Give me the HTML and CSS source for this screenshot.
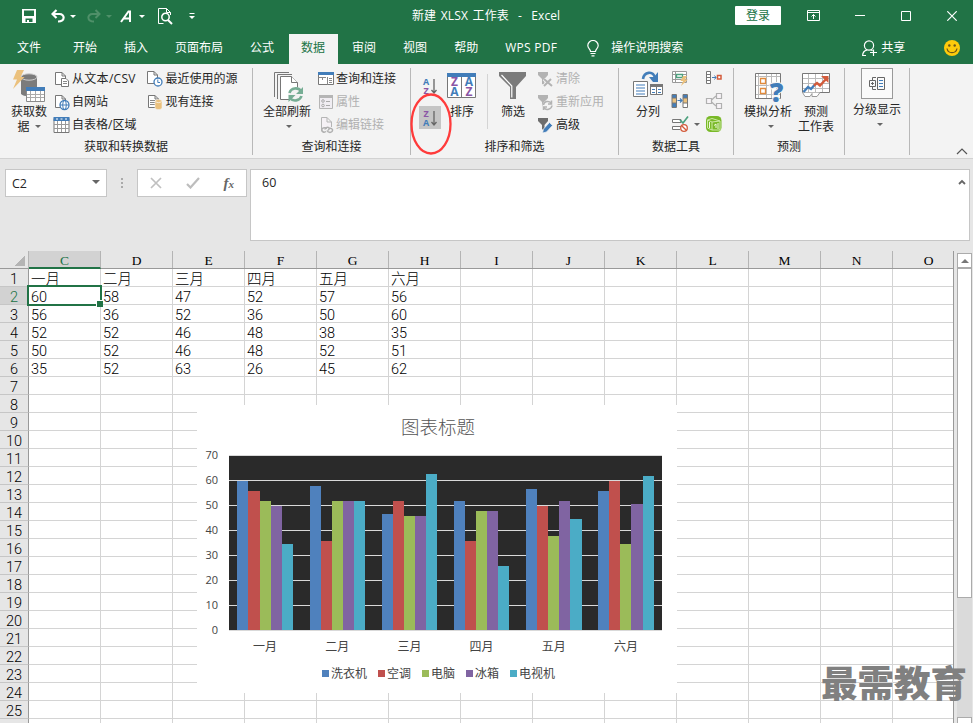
FILE: index.html
```html
<!DOCTYPE html>
<html lang="zh-CN">
<head>
    <meta charset="UTF-8">
    <meta name="viewport" content="width=device-width, initial-scale=1.0">
    <title>新建 XLSX 工作表 - Excel</title>
    <link rel="stylesheet" href="styles.css">
</head>
<body>

<header class="titlebar">
    <div class="quick">
        <svg class="q-save" width="14" height="14" viewBox="0 0 14 14"><path d="M0 0H14V14H0Z" fill="#fff"/><path d="M2 1.500H12V7H2Z M3.500 9.500H10.500V13H7V11H5V13H3.500Z" fill="#217346"/></svg>
        <svg class="q-undo" width="14" height="14" viewBox="0 0 14 14"><path d="M5.500 1L1.500 5L5.500 9M2 5H8.500C14 5 14.500 12.500 7 12.500" fill="none" stroke="#fff" stroke-width="2.200"/></svg>
        <i class="caret q-caret1"></i>
        <svg class="q-redo" width="14" height="14" viewBox="0 0 14 14"><path d="M8.500 1L12.500 5L8.500 9M12 5H5.500C0 5-.5 12.500 7 12.500" fill="none" stroke="#4f9069" stroke-width="2"/></svg>
        <i class="caret faded q-caret2"></i>
        <svg class="q-font" width="13" height="13" viewBox="0 0 13 13"><path d="M1 12L8.500 1.500H10V12M4 8.500H9.500" fill="none" stroke="#fff" stroke-width="2"/></svg>
        <i class="caret q-caret3"></i>
        <svg class="q-preview" width="15" height="17" viewBox="0 0 15 17"><path d="M5.500 15.500H.5V.5H8.500L12.500 4.500V7M8.500 .5V4.500H12.500" fill="none" stroke="#fff"/><circle cx="7.500" cy="9" r="3.700" fill="none" stroke="#fff" stroke-width="1.500"/><path d="M10 12L14 16" stroke="#fff" stroke-width="2"/></svg>
        <svg class="q-more" width="6" height="6" viewBox="0 0 6 6"><path d="M.5 .5H5.500" stroke="#fff"/><path d="M0 3H6L3 6Z" fill="#fff"/></svg>
    </div>
    <div class="doc-title">新建 XLSX 工作表&nbsp; -&nbsp; Excel</div>
    <button class="login">登录</button>
    <div class="window-buttons">
        <svg width="13" height="11" viewBox="0 0 13 11"><path d="M.5 .5H12.500V10.500H.5ZM.5 2.500H12.500M6.500 9V4.500M4.500 6.500L6.500 4.500L8.500 6.500" fill="none" stroke="#fff"/></svg>
        <svg width="10" height="11" viewBox="0 0 10 11"><path d="M0 5.500H10" stroke="#fff"/></svg>
        <svg width="10" height="10" viewBox="0 0 10 10"><path d="M.5 .5H9.500V9.500H.5Z" fill="none" stroke="#fff"/></svg>
        <svg width="10" height="10" viewBox="0 0 10 10"><path d="M.3 .3L9.700 9.700M9.700 .3L.3 9.700" stroke="#fff" stroke-width="1.200"/></svg>
    </div>
</header>

<nav class="tabs">
    <span class="tab file">文件</span>
    <span class="tab">开始</span>
    <span class="tab">插入</span>
    <span class="tab">页面布局</span>
    <span class="tab">公式</span>
    <span class="tab active">数据</span>
    <span class="tab">审阅</span>
    <span class="tab">视图</span>
    <span class="tab">帮助</span>
    <span class="tab pdf">WPS PDF</span>
    <span class="tell-me">
        <svg width="12" height="17" viewBox="0 0 12 17"><path d="M3.500 11.500C3.500 9 .8 8.500 .8 5.500A5.200 5 0 0 1 11.200 5.500C11.200 8.500 8.500 9 8.500 11.500ZM3.500 13.500H8.500M4.500 15.800H7.500" fill="none" stroke="#fff" stroke-width="1.200"/></svg>
        操作说明搜索
    </span>
    <span class="share">
        <svg width="15" height="17" viewBox="0 0 15 17"><circle cx="7" cy="5.500" r="4.600" fill="none" stroke="#fff" stroke-width="1.200"/><path d="M.6 16C.6 12.500 2.500 10.500 5 9.800M9 9.700L10.500 10.800M11.500 9.500V16M8 12.500H15M.2 15.500H4" fill="none" stroke="#fff" stroke-width="1.200"/></svg>
        共享
    </span>
    <svg class="smiley" width="16" height="16" viewBox="0 0 16 16"><circle cx="8" cy="8" r="8" fill="#fecb0b"/><circle cx="5.300" cy="5.500" r="1.200" fill="#6b5518"/><circle cx="10.700" cy="5.500" r="1.200" fill="#6b5518"/><path d="M3 8.500C4 14 12 14 13 8.500" fill="none" stroke="#6b5518" stroke-width="1.200"/></svg>
</nav>

<section class="ribbon">
    <div class="group g-get">
        <div class="tools">
            <div class="big get-data">
                <svg width="34" height="34" viewBox="0 0 34 34"><path d="M9 9V26C12 29 20 29 25 26V9" fill="#7b7b7b"/><ellipse cx="17" cy="9" rx="8" ry="3.200" fill="#7b7b7b" stroke="#d0d0d0"/><path d="M5 2H12L8.500 9H12.500L1 21L5 11.500H1Z" fill="#ebc17d"/><path d="M14.500 19.500H32.500V33.500H14.500Z" fill="#fff" stroke="#8a8a8a"/><path d="M14 19H33V23H14Z" fill="#427db9"/><path d="M15 26.500H32M15 29.500H32M18.500 23V33M23.500 23V33M28.500 23V33" stroke="#aaa"/></svg>
                <span>获取数</span>
                <span>据<i class="caret dark"></i></span>
            </div>
            <div class="list">
                <div class="small"><svg width="18" height="18" viewBox="0 0 18 18"><path d="M2.500 2.500H9L12.500 6V14.500H2.500ZM9 2.500V6H12.500" fill="#fff" stroke="#777"/><path d="M8.500 8.500H13L15.500 11V16.500H8.500Z" fill="#fff" stroke="#777"/><path d="M10 11.500H14M10 13.500H14" stroke="#888"/></svg><span class="csv">从文本/CSV</span></div>
                <div class="small"><svg width="18" height="18" viewBox="0 0 18 18"><path d="M2.500 2.500H9L12.500 6V14.500H2.500ZM9 2.500V6H12.500" fill="#fff" stroke="#777"/><circle cx="11.500" cy="12" r="4.500" fill="#fff" stroke="#427db9" stroke-width="1.300"/><ellipse cx="11.500" cy="12" rx="1.800" ry="4.500" fill="none" stroke="#427db9"/><path d="M7 12H16" stroke="#427db9"/></svg>自网站</div>
                <div class="small"><svg width="18" height="18" viewBox="0 0 18 18"><path d="M1 2.500H16V16.500H1Z" fill="#fff" stroke="#777"/><path d="M0.500 1H16.500V5H.5Z" fill="#427db9"/><path d="M3 3H5M7.500 3H9.500M12 3H14" stroke="#fff"/><path d="M1 8.500H16M1 12.500H16M4.500 5V16M8.500 5V16M12.500 5V16" stroke="#999"/></svg>自表格/区域</div>
            </div>
            <div class="list recent">
                <div class="small"><svg width="18" height="18" viewBox="0 0 18 18"><path d="M1.500 1.500H8L11.500 5V13.500H1.500ZM8 1.500V5H11.500" fill="#fff" stroke="#777"/><circle cx="12" cy="12" r="4" fill="#fff" stroke="#427db9" stroke-width="1.300"/><path d="M11.800 9.500V12.500H14" fill="none" stroke="#427db9"/></svg>最近使用的源</div>
                <div class="small"><svg width="18" height="18" viewBox="0 0 18 18"><path d="M2.500 2.500H9L12.500 6V14.500H2.500ZM9 2.500V6H12.500" fill="#fff" stroke="#777"/><path d="M4 7.500H9M4 9.500H9M4 11.500H9" stroke="#888"/><path d="M9 8V15C10 17 15 17 16 15V8C15 6 10 6 9 8Z" fill="#ebc17d" stroke="#f3f3f3" stroke-width=".6"/><path d="M9.500 8.500C11 10 14 10 15.500 8.500" stroke="#fff" fill="none" stroke-width=".7"/></svg>现有连接</div>
            </div>
        </div>
        <div class="caption">获取和转换数据</div>
    </div>

    <div class="group g-query">
        <div class="tools">
            <div class="big refresh">
                <svg width="34" height="34" viewBox="0 0 34 34"><path d="M4.500 29V4.500H19M7.500 31V6.500H22" fill="none" stroke="#777"/><path d="M10.500 8.500H21.500L27.500 14.500V31.500H10.500Z" fill="#fff" stroke="#777"/><path d="M21.500 8.500V14.500H27.500" fill="#fff" stroke="#777"/><circle cx="25.500" cy="26.500" r="7.500" fill="#f3f3f3"/><path d="M19.500 25C21 19.500 28 19 31 23M31.500 28C30 33 23 34 20 30" fill="none" stroke="#76ad94" stroke-width="2.600"/><path d="M33 19V26H26ZM18.500 34V27H25.500Z" fill="#76ad94"/></svg>
                <span>全部刷新</span>
                <i class="caret dark"></i>
            </div>
            <div class="list">
                <div class="small"><svg width="18" height="18" viewBox="0 0 18 18"><path d="M1.500 2.500H16.500V14.500H1.500Z" fill="#fff" stroke="#777"/><path d="M1 2H17V5H1Z" fill="#427db9"/><path d="M10.500 7V15M1.500 7.500H9M12 8.500H15M12 10.500H15M12 12.500H15M5.500 7V10" stroke="#888"/></svg>查询和连接</div>
                <div class="small off"><svg width="18" height="18" viewBox="0 0 18 18"><path d="M2.500 2.500H15.500V15.500H2.500Z" fill="#f0edf2" stroke="#b5b5b5"/><path d="M2 2H16V5H2Z" fill="#b5b5b5"/><circle cx="6" cy="8" r="1.300" fill="none" stroke="#aaa"/><circle cx="6" cy="12.500" r="1.300" fill="none" stroke="#aaa"/><path d="M9 8.500H13M9 12.500H13" stroke="#aaa"/></svg>属性</div>
                <div class="small off"><svg width="18" height="18" viewBox="0 0 18 18"><path d="M4.500 14.500V1.500H10L14.500 6V11M10 1.500V6H14.500" fill="#f5f1f5" stroke="#b5b5b5"/><path d="M9 15.500C7 17 4 15.500 5 13C6 11 9 11.500 9.500 13M8 13.500C8 11 12 10.500 12.500 13M11 14.500C13 10.500 17 13 15 15.500C13.500 17 11 16.500 10 14.500" fill="none" stroke="#b0b0b0" stroke-width="1.500"/></svg>编辑链接</div>
            </div>
        </div>
        <div class="caption">查询和连接</div>
    </div>

    <div class="group g-sort">
        <div class="tools">
            <div class="sort-pair">
                <div class="sort-btn"><svg width="16" height="20" viewBox="0 0 16 20"><text class="letter a" x="4" y="9">A</text><text class="letter z" x="4" y="17.500">Z</text><path d="M12 3V17M9.500 14L12 17L14.500 14" fill="none" stroke="#666" stroke-width="1.300"/></svg></div>
                <div class="sort-btn pressed"><svg width="16" height="20" viewBox="0 0 16 20"><text class="letter z" x="4" y="9">Z</text><text class="letter a" x="4" y="17.500">A</text><path d="M12 3V17M9.500 14L12 17L14.500 14" fill="none" stroke="#666" stroke-width="1.300"/></svg></div>
            </div>
            <div class="big sort">
                <svg width="34" height="34" viewBox="0 0 34 34"><path d="M2.500 6.500H30.500V29.500H2.500Z" fill="#fff" stroke="#777"/><path d="M2 5H31V9H2Z" fill="#427db9"/><path d="M16.500 9V29" stroke="#777"/><text class="letter big-letter z" x="9.500" y="18">Z</text><text class="letter big-letter a" x="9.500" y="28">A</text><text class="letter big-letter a" x="24" y="18">A</text><text class="letter big-letter z" x="24" y="28">Z</text></svg>
                <span>排序</span>
            </div>
            <div class="divider"></div>
            <div class="big filter">
                <svg width="34" height="34" viewBox="0 0 34 34"><path d="M3 4H30V8L20 19V31H14V19L3 8Z" fill="#7b7b7b"/><path d="M5.500 7L15.800 18V29.500" fill="none" stroke="#fff" stroke-width="1.200"/></svg>
                <span>筛选</span>
            </div>
            <div class="list">
                <div class="small off"><svg width="18" height="18" viewBox="0 0 18 18"><path d="M1 2H11V5L7.500 9V15L5 14V9L1 5Z" fill="#b3b3b3"/><path d="M7 9L14 16M14 9L7 16" stroke="#f3f3f3" stroke-width="3.500"/><path d="M7 9L15 16M14 9L7 16" stroke="#b3b3b3" stroke-width="2"/></svg>清除</div>
                <div class="small off"><svg width="18" height="18" viewBox="0 0 18 18"><path d="M1 2H11V5L7.500 9V14L5 13V9L1 5Z" fill="#b3b3b3"/><circle cx="10.500" cy="12.500" r="5" fill="#f3f3f3"/><path d="M6.500 12C7 8 12 7.500 14 10M15 12.500C14.500 16.500 9 17.500 7 15M14.500 7.500V11H11M6.500 17V14H10" fill="none" stroke="#b3b3b3" stroke-width="1.500"/></svg>重新应用</div>
                <div class="small"><svg width="18" height="18" viewBox="0 0 18 18"><path d="M1 2H11V5L7.500 9V15L5 13V9L1 5Z" fill="#6d6d6d"/><path d="M5.500 17L6.500 13L12.500 6.500L15.500 9.500L9.500 16Z" fill="#427db9" stroke="#f3f3f3" stroke-width=".7"/></svg>高级</div>
            </div>
            <svg class="marker" width="44" height="64" viewBox="0 0 44 64"><ellipse cx="22" cy="32" rx="19.500" ry="29.500" fill="none" stroke="#ff3b3b" stroke-width="2.300"/></svg>
        </div>
        <div class="caption">排序和筛选</div>
    </div>

    <div class="group g-data">
        <div class="tools">
            <div class="big split">
                <svg width="34" height="34" viewBox="0 0 34 34"><path d="M2.500 13.500H16.500V28.500H2.500Z" fill="#fff" stroke="#777"/><path d="M5 17H14M5 20H14M5 23H14M5 26H14" stroke="#427db9" stroke-width="1.200"/><path d="M19.500 16.500H31.500V26.500H19.500Z" fill="#fff" stroke="#777"/><path d="M19 16H32V19H19Z" fill="#777"/><path d="M25.500 19V26" stroke="#777"/><path d="M21 21.500H24M27 21.500H30M21 24.500H24M27 24.500H30" stroke="#427db9"/><path d="M12 11C13 4 22 2 24 10" fill="none" stroke="#427db9" stroke-width="2.600"/><path d="M18 9H23L27 4V14H22Z" fill="#427db9"/></svg>
                <span>分列</span>
            </div>
            <div class="icons">
                <svg width="18" height="18" viewBox="0 0 18 18"><path d="M1.500 2.500H15.500V13.500H1.500ZM1 5.500H16M1 10.500H16M4.500 2V14" fill="#fff" stroke="#999"/><path d="M5.500 5.500H11.500V8.500H5.500Z" fill="#fff" stroke="#4ca17e" stroke-width="1.300"/><path d="M12 7H16L14 10.500H17L10 17L12 12H9.500Z" fill="#ebc17d"/></svg>
                <svg width="18" height="18" viewBox="0 0 18 18"><path d="M1 2H5V15H1ZM12 2H16V15H12Z" fill="#ebc17d"/><path d="M1 2H5V6H1ZM1 11H5V15H1ZM12 2H16V6H12Z" fill="#427db9"/><path d="M12 11H16V15H12Z" fill="#fff"/><path d="M1 2.500H5.500V15.500H1ZM12 2.500H16.500V15.500H12ZM1 6H5.500M1 11H5.500M12 6H16.500M12 11H16.500" fill="none" stroke="#777"/><path d="M6.500 8.500H11M9 6.500L11 8.500L9 10.500" fill="none" stroke="#427db9" stroke-width="1.200"/></svg>
                <svg width="18" height="18" viewBox="0 0 18 18"><path d="M1.500 4.500H10V7.500H1.500ZM10 11.500H1.500V14.500H9" fill="#fff" stroke="#777"/><path d="M9 5L12 8L17 1.500" fill="none" stroke="#4ca17e" stroke-width="1.700"/><circle cx="13" cy="13" r="3.300" fill="#fff" stroke="#d35b3b" stroke-width="1.300"/><path d="M10.700 10.700L15.300 15.300" stroke="#d35b3b" stroke-width="1.300"/></svg>
            </div>
            <i class="caret dark valid-caret"></i>
            <div class="icons second">
                <svg width="18" height="18" viewBox="0 0 18 18"><path d="M1.500 2.500H5.500V14.500H1.500ZM1.500 5.500H5.500M1.500 8.500H5.500M1.500 11.500H5.500" fill="#fff" stroke="#777"/><path d="M7 8.500H11M9.500 6.500L11 8.500L9.500 10.500" fill="none" stroke="#427db9"/><path d="M12.500 6.500H16V10H12.500Z" fill="#fff" stroke="#d35b3b" stroke-width="1.500"/></svg>
                <svg width="18" height="18" viewBox="0 0 18 18"><path d="M6.500 8L11 4M6.500 10L11 14" stroke="#b0b0b0" stroke-width="1.200"/><path d="M1.500 6.500H6.500V11.500H1.500ZM11.500 1.500H16.500V6.500H11.500ZM11.500 11.500H16.500V16.500H11.500Z" fill="#f7f3f7" stroke="#b0b0b0" stroke-width="1.200"/></svg>
                <svg width="18" height="18" viewBox="0 0 18 18"><rect x="1" y="1" width="15.500" height="16" rx="4.500" fill="#79b928"/><path d="M2.500 5L7 3.500L15 6V15H7L2.500 13ZM7 7V15M2.500 5L7 7L15 6" fill="none" stroke="#cdeaa5"/><path d="M9 10.500L11 9V13M13 8V14M4.500 7V13" fill="none" stroke="#eef9de"/></svg>
            </div>
        </div>
        <div class="caption">数据工具</div>
    </div>

    <div class="group g-forecast">
        <div class="tools">
            <div class="big whatif">
                <svg width="34" height="34" viewBox="0 0 34 34"><path d="M4.500 5.500H29.500V30.500H4.500Z" fill="#fff" stroke="#777"/><path d="M5 8.500H29M5 17.500H29M5 26.500H29M7.500 6V30M15.500 6V30M20.500 6V30M25.500 6V30" stroke="#bbb"/><path d="M9.500 10.500H14.500V15.500H9.500ZM9.500 20.500H14.500V25.500H9.500Z" fill="#fff" stroke="#e08a3c" stroke-width="1.300"/><text class="question" x="25.500" y="33.500">?</text></svg>
                <span>模拟分析</span>
                <i class="caret dark"></i>
            </div>
            <div class="big forecast">
                <svg width="34" height="34" viewBox="0 0 34 34"><path d="M3.500 5.500H30.500V24.500H3.500Z" fill="#fff" stroke="#777"/><path d="M4 10.500H30M4 15.500H30M4 20.500H30M9.500 6V24M16.500 6V24M23.500 6V24" stroke="#bbb"/><path d="M3.500 24.500L6 28.500H11L13 25.500V28.500H18L21 24.500" fill="#fff" stroke="#999"/><path d="M4.500 24L9 19L12 21L15.500 17" fill="none" stroke="#427db9" stroke-width="2.400"/><path d="M15 17.500L18 15L21 17.500L28 10" fill="none" stroke="#d35b3b" stroke-width="2.400"/><path d="M22 8H29.500V15Z" fill="#d35b3b"/></svg>
                <span>预测</span>
                <span>工作表</span>
            </div>
        </div>
        <div class="caption">预测</div>
    </div>

    <div class="group g-outline">
        <div class="outline-box"><svg width="18" height="16" viewBox="0 0 18 16"><path d="M8 1.500H4.500V4M4.500 11V13.500H8M1.500 4.500H7.500V10.500H1.500ZM3 7.500H6M4.500 6V9M9.500 1.500H16.500V13.500H9.500Z" fill="none" stroke="#666"/><path d="M11 4.500H15M11 7.500H15M11 10.500H15" stroke="#427db9"/></svg></div>
        <span>分级显示</span>
        <i class="caret dark"></i>
    </div>
    <svg class="collapse" width="12" height="7" viewBox="0 0 12 7"><path d="M1 6L6 1L11 6" fill="none" stroke="#555" stroke-width="1.200"/></svg>
</section>

<section class="formula-bar">
    <div class="name-box">C2<i class="caret dark"></i></div>
    <div class="dots"><i></i><i></i><i></i></div>
    <div class="fx-box">
        <svg width="12" height="12" viewBox="0 0 12 12"><path d="M1 1L11 11M11 1L1 11" stroke="#c0c0c0" stroke-width="1.700"/></svg>
        <svg width="14" height="12" viewBox="0 0 14 12"><path d="M1 7L4.500 10.500L13 1" fill="none" stroke="#bdbdbd" stroke-width="2.200"/></svg>
        <span class="fx">f<small>x</small></span>
    </div>
    <div class="formula">60<svg width="8" height="6" viewBox="0 0 8 6"><path d="M1 5L4 2L7 5" fill="none" stroke="#666" stroke-width="1.800"/></svg></div>
</section>

<main class="workspace">
    <div class="sheet" id="sheet">
        <div class="selection"></div>
        <div class="chart">
            <div class="chart-title">图表标题</div>
            <div class="chart-body">
                <div class="axis" id="axis"></div>
                <div class="plot" id="plot"></div>
            </div>
            <div class="months" id="months"></div>
            <div class="legend" id="legend"></div>
        </div>
    </div>
    <div class="scrollbar">
        <div class="scroll-up"><i></i></div>
        <div class="thumb"></div>
        <div class="track"></div>
        <div class="scroll-down"></div>
    </div>
    <div class="watermark">最需教育</div>
</main>

<script>
    const columns = ['C', 'D', 'E', 'F', 'G', 'H', 'I', 'J', 'K', 'L', 'M', 'N', 'O'];
    const months = ['一月', '二月', '三月', '四月', '五月', '六月'];
    const series = [
        { name: '洗衣机', cls: 'blue', values: [60, 58, 47, 52, 57, 56] },
        { name: '空调', cls: 'red', values: [56, 36, 52, 36, 50, 60] },
        { name: '电脑', cls: 'green', values: [52, 52, 46, 48, 38, 35] },
        { name: '冰箱', cls: 'purple', values: [50, 52, 46, 48, 52, 51] },
        { name: '电视机', cls: 'teal', values: [35, 52, 63, 26, 45, 62] }
    ];
    const rows = [months].concat(series.map(s => s.values));
    const axisMax = 70;

    function add(parent, cls, text) {
        const el = document.createElement('div');
        el.className = cls;
        if (text !== undefined) el.textContent = text;
        parent.appendChild(el);
        return el;
    }

    // Sheet
    const sheet = document.getElementById('sheet');
    const head = add(sheet, 'row head');
    add(head, 'corner');
    columns.forEach((c, i) => add(head, i === 0 ? 'col current' : 'col', c));

    for (let r = 0; r < 26; r++) {
        const row = add(sheet, 'row');
        add(row, r === 1 ? 'num current' : 'num', r < 25 ? r + 1 : '');
        columns.forEach((c, i) => {
            const value = rows[r] ? rows[r][i] : undefined;
            add(row, 'cell', value);
        });
    }

    // Chart
    const axis = document.getElementById('axis');
    const plot = document.getElementById('plot');
    for (let v = axisMax; v >= 0; v -= 10) {
        add(axis, 'tick', v);
    }
    months.forEach((m, i) => {
        const cluster = add(plot, 'cluster');
        series.forEach(s => {
            add(cluster, 'bar ' + s.cls).style.height = (s.values[i] / axisMax * 100) + '%';
        });
        add(document.getElementById('months'), 'month', m);
    });
    series.forEach(s => {
        const item = add(document.getElementById('legend'), 'legend-item');
        add(item, 'swatch ' + s.cls);
        add(item, 'legend-name', s.name);
    });
</script>

</body>
</html>
```
FILE: styles.css
```css
* {
    box-sizing: border-box;
}
body {
    margin: 0;
    width: 973px;
    height: 723px;
    overflow: hidden;
    display: flex;
    flex-direction: column;
    background-color: #e6e6e6;
    font-family: "Open Sans", "Noto Sans CJK SC", sans-serif;
    font-size: 12px;
    line-height: 15px;
    color: #262626;
    white-space: nowrap;
}
svg {
    display: block;
    flex: none;
}
.caret {
    display: inline-block;
    flex: none;
    border: 3px solid transparent;
    border-top-color: #fff;
    border-bottom: none;
    width: 6px;
    height: 3px;
}
.caret.faded {
    border-top-color: #4f9069;
}
.caret.dark {
    border-top-color: #666;
}

/* Title bar */
.titlebar {
    height: 34px;
    flex: none;
    display: flex;
    background-color: #217346;
    color: #fff;
}
.quick {
    width: 412px;
    height: 32px;
    padding-left: 22px;
    display: flex;
    align-items: center;
}
.q-undo {
    margin-left: 15px;
}
.q-caret1 {
    margin-left: 5px;
}
.q-redo {
    margin-left: 11px;
}
.q-caret2 {
    margin-left: 5px;
}
.q-font {
    margin-left: 8px;
}
.q-caret3 {
    margin-left: 6px;
}
.q-preview {
    margin-left: 13px;
}
.q-more {
    margin-left: 16px;
}
.doc-title {
    width: 323px;
    line-height: 31px;
    letter-spacing: .1px;
    word-spacing: 1.4px;
}
.login {
    width: 46px;
    height: 19px;
    margin-top: 6px;
    padding: 0;
    border: none;
    border-radius: 1px;
    background-color: #fff;
    color: #217346;
    font: inherit;
    line-height: 19px;
}
.window-buttons {
    height: 31px;
    margin-left: 26px;
    display: flex;
    align-items: center;
    gap: 36px;
}
.window-buttons svg:first-child {
    margin-right: -1px;
}

/* Tabs */
.tabs {
    height: 30px;
    flex: none;
    display: flex;
    gap: 2px;
    padding-left: 5px;
    background-color: #217346;
    color: #fff;
    line-height: 28px;
}
.tab {
    padding: 0 13px 0 12px;
}
.tab.file {
    margin-right: 5px;
}
.tab.active {
    background-color: #f3f3f3;
    color: #217346;
}
.tab.pdf {
    width: 92px;
    letter-spacing: .3px;
}
.tell-me {
    display: flex;
    align-items: center;
    gap: 12px;
    height: 28px;
    width: 273px;
}
.share {
    display: flex;
    align-items: center;
    gap: 4px;
    height: 28px;
    width: 80px;
}
.smiley {
    margin-top: 6px;
}

/* Ribbon */
.ribbon {
    height: 95px;
    flex: none;
    display: flex;
    position: relative;
    background-color: #f3f3f3;
    border-bottom: 1px solid #d2d2d2;
    padding-top: 4px;
}
.group {
    height: 87px;
    flex: none;
    display: flex;
    flex-direction: column;
    border-right: 1px solid #b8b8b8;
}
.tools {
    height: 70px;
    flex: none;
    display: flex;
    align-items: flex-start;
    position: relative;
}
.caption {
    padding-top: 1px;
    text-align: center;
    line-height: 16px;
}
.big {
    display: flex;
    flex-direction: column;
    align-items: center;
    flex: none;
}
.big svg {
    margin-bottom: 2px;
}
.big .caret {
    margin-top: 6px;
}
.big span .caret {
    margin: 0 0 3px 5px;
}
.list {
    display: flex;
    flex-direction: column;
    flex: none;
    margin-top: -1px;
}
.small {
    height: 23px;
    display: flex;
    align-items: center;
    gap: 1px;
}
.small.off {
    color: #b1b1b1;
}
.csv {
    letter-spacing: .3px;
}
.letter {
    font: 700 9px "Open Sans", sans-serif;
    text-anchor: middle;
}
.big-letter {
    font-size: 12px;
}
.letter.a {
    fill: #427db9;
}
.letter.z {
    fill: #8b56a5;
}
.question {
    font: 800 27px "Open Sans", sans-serif;
    text-anchor: middle;
    fill: #427db9;
    stroke: #f3f3f3;
    stroke-width: 2px;
    paint-order: stroke;
}
.g-get {
    width: 253px;
}
.get-data {
    width: 40px;
    margin: 0 4px 0 9px;
}
.recent {
    margin-left: 10px;
}
.g-query {
    width: 158px;
}
.refresh {
    width: 48px;
    margin: 0 6px 0 10px;
}
.refresh .caret {
    margin-left: 4px;
}
.g-sort {
    width: 208px;
}
.sort-pair {
    width: 22px;
    margin: 6px 4px 0 8px;
    display: flex;
    flex-direction: column;
    gap: 9px;
}
.sort-btn {
    height: 23px;
    display: flex;
    align-items: center;
    justify-content: center;
}
.sort-btn.pressed {
    background-color: #c5c5c5;
}
.big.sort {
    width: 34px;
}
.divider {
    width: 1px;
    height: 55px;
    margin: 6px 8px 0 8px;
    background-color: #d4d4d4;
}
.filter {
    width: 34px;
    margin-right: 7px;
}
.marker {
    position: absolute;
    left: -2px;
    top: 24px;
}
.g-data {
    width: 115px;
}
.split {
    width: 34px;
    margin: 0 6px 0 12px;
}
.icons {
    display: flex;
    flex-direction: column;
    gap: 5px;
    margin-top: 1px;
}
.icons.second {
    margin-left: 5px;
}
.valid-caret {
    margin: 55px 0 0 5px;
}
.g-forecast {
    width: 111px;
}
.whatif {
    width: 48px;
    margin: 0 6px 0 10px;
}
.whatif .caret {
    margin-left: 5px;
}
.forecast {
    width: 36px;
}
.g-outline {
    width: 65px;
    align-items: center;
}
.outline-box {
    width: 32px;
    height: 31px;
    margin-bottom: 3px;
    border: 1px solid #999;
    background-color: #fafafa;
    display: flex;
    align-items: center;
    justify-content: center;
}
.g-outline .caret {
    margin: 6px 0 0 5px;
}
.collapse {
    margin: 80px 0 0 46px;
}

/* Formula bar */
.formula-bar {
    height: 92px;
    flex: none;
    display: flex;
    align-items: flex-start;
    padding: 10px 3px 0 5px;
}
.name-box {
    width: 102px;
    height: 28px;
    padding: 0 6px;
    display: flex;
    align-items: center;
    justify-content: space-between;
    background-color: #fff;
    border: 1px solid #c6c6c6;
    font-size: 12.5px;
}
.name-box .caret {
    border-width: 4px 4px 0;
    width: 8px;
    height: 4px;
    margin-top: -3px;
}
.dots {
    width: 30px;
    height: 28px;
    display: flex;
    flex-direction: column;
    align-items: center;
    justify-content: center;
    gap: 2px;
}
.dots i {
    width: 2px;
    height: 2px;
    background-color: #aaa;
}
.fx-box {
    width: 110px;
    height: 28px;
    padding: 0 12px;
    display: flex;
    align-items: center;
    justify-content: space-between;
    background-color: #fff;
    border: 1px solid #c6c6c6;
}
.fx {
    font: italic bold 15px/16px "Liberation Serif", serif;
    color: #666;
}
.fx small {
    font-size: 11px;
}
.formula {
    width: 720px;
    height: 72px;
    margin-left: 3px;
    padding: 5px 3px 0 11px;
    display: flex;
    justify-content: space-between;
    background-color: #fff;
    border: 1px solid #c6c6c6;
    font-size: 12.5px;
}
.formula svg {
    margin-top: 4px;
}

/* Sheet */
.workspace {
    height: 472px;
    flex: none;
    display: flex;
    position: relative;
}
.sheet {
    width: 954px;
    height: 472px;
    overflow: hidden;
    position: relative;
    background-color: #fff;
    border-right: 1px solid #999;
    font-family: Roboto, "Noto Sans CJK SC", sans-serif;
    font-size: 14.5px;
    font-weight: 300;
    color: #000;
}
.row {
    display: flex;
    height: 18px;
}
.head {
    background-color: #e6e6e6;
    border-bottom: 1px solid #999;
    font-family: "Liberation Serif", serif;
    font-size: 13.5px;
}
.corner {
    flex: none;
    width: 29px;
    background: linear-gradient(135deg, transparent 50%, #b4b4b4 50%) no-repeat 15px 5px / 10px 10px;
    border-right: 1px solid #b4b4b4;
}
.col {
    flex: none;
    width: 72px;
    border-right: 1px solid #b4b4b4;
    text-align: center;
    line-height: 20px;
}
.col.current {
    height: 18px;
    background-color: #d2d2d2;
    border-bottom: 2px solid #217346;
    color: #217346;
}
.num {
    flex: none;
    width: 29px;
    background-color: #e6e6e6;
    border-right: 1px solid #999;
    border-bottom: 1px solid #c6c6c6;
    text-align: center;
    line-height: 22px;
}
.num.current {
    background-color: #d2d2d2;
    color: #217346;
}
.cell {
    flex: none;
    width: 72px;
    padding-left: 2px;
    border-right: 1px solid #d4d4d4;
    border-bottom: 1px solid #d4d4d4;
    line-height: 22px;
}
.selection {
    position: absolute;
    left: 27px;
    top: 34px;
    width: 75px;
    height: 21px;
    border: 2px solid #217346;
}
.selection::after {
    content: "";
    position: absolute;
    right: -3px;
    bottom: -3px;
    width: 6px;
    height: 6px;
    background-color: #217346;
    border-top: 1px solid #fff;
    border-left: 1px solid #fff;
}

/* Chart */
.chart {
    position: absolute;
    left: 197px;
    top: 154px;
    width: 480px;
    height: 288px;
    background-color: #fff;
    font-family: "Open Sans", "Noto Sans CJK SC", sans-serif;
    font-size: 12px;
    font-weight: 400;
    color: #444;
}
.chart-title {
    height: 50px;
    line-height: 44px;
    padding-left: 2px;
    text-align: center;
    font-size: 18.5px;
    font-weight: 300;
    color: #555;
}
.chart-body {
    display: flex;
    height: 176px;
}
.axis {
    width: 21px;
    margin: -13px 11px 0 0;
    text-align: right;
    font-size: 11px;
}
.tick {
    height: 25px;
    line-height: 25px;
}
.plot {
    width: 433px;
    height: 176px;
    display: flex;
    padding-top: 1px;
    overflow: hidden;
    border-bottom: 1px solid #d9d9d9;
    background: repeating-linear-gradient(#d9d9d9 0 1px, #2a2a2a 1px 25px);
}
.cluster {
    flex: 1;
    height: 175px;
    display: flex;
    align-items: flex-end;
    justify-content: center;
}
.bar {
    width: 11.1px;
}
.blue {
    background-color: #4f81bd;
}
.red {
    background-color: #c0504d;
}
.green {
    background-color: #9bbb59;
}
.purple {
    background-color: #8064a2;
}
.teal {
    background-color: #4bacc6;
}
.months {
    width: 433px;
    margin-left: 32px;
    display: flex;
}
.month {
    flex: 1;
    text-align: center;
    line-height: 31px;
}
.legend {
    display: flex;
    justify-content: center;
    gap: 11px;
    padding-left: 3px;
    line-height: 23px;
}
.legend-item {
    display: flex;
    align-items: center;
    gap: 2px;
}
.swatch {
    width: 7px;
    height: 7px;
}

/* Scroll bar and watermark */
.scrollbar {
    width: 19px;
    height: 472px;
    padding: 2px 1px 0 3px;
    display: flex;
    flex-direction: column;
}
.scroll-up {
    height: 15px;
    background-color: #fff;
    border: 1px solid #ababab;
    display: flex;
    align-items: center;
    justify-content: center;
}
.scroll-up i {
    border: 4px solid transparent;
    border-top: none;
    border-bottom-color: #777;
}
.thumb {
    height: 330px;
    background-color: #fff;
    border: 1px solid #ababab;
}
.track {
    height: 119px;
    background-color: #dadada;
}
.scroll-down {
    height: 6px;
    background-color: #fff;
    border: 1px solid #ababab;
    border-bottom: none;
}
.watermark {
    position: absolute;
    left: 821px;
    top: 404px;
    font: 900 36.5px/54px "Noto Sans CJK SC", sans-serif;
    color: #808080;
}
```
